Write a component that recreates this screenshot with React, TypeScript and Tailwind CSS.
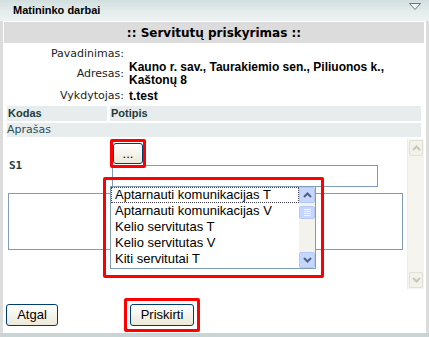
const items = [
  "Aptarnauti komunikacijas T",
  "Aptarnauti komunikacijas V",
  "Kelio servitutas T",
  "Kelio servitutas V",
  "Kiti servitutai T",
];

function XpButton({ label, className }: { label: string; className: string }) {
  return (
    <button
      className={`flex items-center justify-center rounded-[3px] border border-[#003c74] bg-gradient-to-b from-white to-[#ece9d8] font-['Liberation_Sans',sans-serif] text-[13px] text-black ${className}`}
    >
      {label}
    </button>
  );
}

function Chevron({ up, color }: { up?: boolean; color: string }) {
  return (
    <svg width="9" height="6" viewBox="0 0 9 6">
      <path d={up ? "M1 5 L4.5 1.5 L8 5" : "M1 1 L4.5 4.5 L8 1"} fill="none" stroke={color} strokeWidth="2" />
    </svg>
  );
}

export default function App() {
  return (
    <div className="relative flex h-[337px] w-[429px] flex-col bg-[#dcdcdc] font-['DejaVu_Sans',sans-serif]">
      {/* Panel title */}
      <div className="flex h-[21px] shrink-0 items-center justify-between bg-gradient-to-b from-[#d2dfdf] via-[#e3ebeb] to-[#eef3f3] pl-[13px] pr-[8px]">
        <span className="font-['Liberation_Sans',sans-serif] text-[11px] font-bold text-black">Matininko darbai</span>
        <svg width="12" height="7" viewBox="0 0 12 7" className="mb-[8px]">
          <path d="M0.5 0.5 L11.5 0.5 L6 6.5 Z" fill="#f4f4f4" stroke="#6a7a7a" />
        </svg>
      </div>

      {/* Body */}
      <div className="ml-[3px] mr-[3px] flex flex-1 flex-col bg-white pl-[1px] pr-[2px] pt-[1px]">
        <div className="flex h-[21px] items-center justify-center bg-[#dcdcdc] text-[12px] font-bold text-black">
          :: Servitutų priskyrimas ::
        </div>

        {/* Info */}
        <div className="mt-[5px] grid grid-cols-[120px_1fr] gap-x-[5px] text-[11px] leading-[12px]">
          <span className="text-right text-[#222]">Pavadinimas:</span>
          <span />
          <span className="mt-[1px] self-center text-right text-[#222]">Adresas:</span>
          <span className="mt-[1px] font-['Liberation_Sans',sans-serif] text-[12px] font-bold leading-[13px] text-black">
            Kauno r. sav., Taurakiemio sen., Piliuonos k.,
            <br />
            Kaštonų 8
          </span>
          <span className="mt-[3px] text-right text-[#222]">Vykdytojas:</span>
          <span className="mt-[3px] font-['Liberation_Sans',sans-serif] text-[12px] font-bold text-black">t.test</span>
        </div>

        {/* Table header */}
        <div className="mt-[4px] flex gap-[3px] px-[3px] text-[11px]">
          <div className="flex h-[15px] w-[100px] items-center bg-[#e7eded] pl-[1px] font-['Liberation_Sans',sans-serif] font-bold text-[#1f3b3b]">
            Kodas
          </div>
          <div className="flex h-[15px] flex-1 items-center bg-[#e7eded] pl-[1px] font-['Liberation_Sans',sans-serif] font-bold text-[#1f3b3b]">
            Potipis
          </div>
        </div>
        <div className="mx-[3px] mt-[2px] flex h-[14px] items-center bg-[#e7eded] text-[11px] text-[#2f4f4f]">
          Aprašas
        </div>

        {/* Scroll area */}
        <div className="mt-[2px] flex h-[150px]">
          <div className="flex flex-1 flex-col pl-[4px]">
            <div className="flex">
              <div className="flex w-[101px] items-end pb-[13px] pl-[1px] font-['DejaVu_Sans_Mono',monospace] text-[11px] font-bold text-[#1f3b3b]">
                S1
              </div>
              <div className="flex flex-col">
                <XpButton label="..." className="ml-[4px] mt-[4px] h-[21px] w-[30px]" />
                <div className="ml-[3px] mt-[1px] h-[22px] w-[266px] border border-[#7f9db9] bg-white" />
              </div>
            </div>
            <div className="mt-[6px] h-[57px] w-[395px] border border-[#7f9db9] bg-white" />
          </div>
          {/* Page scrollbar (disabled) */}
          <div className="flex w-[17px] flex-col justify-between border-l border-[#eeede5] bg-[#f5f4ef] p-[1px]">
            <div className="flex h-[16px] items-center justify-center rounded-[2px] border border-[#e2e1d8] bg-[#f2f1ea]">
              <Chevron up color="#c9c7ba" />
            </div>
            <div className="flex h-[16px] items-center justify-center rounded-[2px] border border-[#e2e1d8] bg-[#f2f1ea]">
              <Chevron color="#c9c7ba" />
            </div>
          </div>
        </div>

        {/* Buttons */}
        <div className="mt-[15px] flex items-center">
          <XpButton label="Atgal" className="ml-[2px] h-[22px] w-[52px]" />
          <XpButton label="Priskirti" className="ml-[72px] h-[22px] w-[64px]" />
        </div>
      </div>
      <div className="h-[4px] shrink-0 bg-[#c9d5d5]" />

      {/* Open list box over the form */}
      <div className="absolute left-[110px] top-[186px] flex h-[83px] w-[206px] border border-[#7f9db9] bg-white">
        <div className="flex flex-1 flex-col font-['Liberation_Sans',sans-serif] text-[13px] text-black">
          {items.map((item, i) => (
            <div
              key={item}
              className={`flex h-[16px] items-center pl-[3px] ${i === 0 ? "border border-dotted border-[#445]" : "border border-transparent"}`}
            >
              {item}
            </div>
          ))}
        </div>
        <div className="flex w-[16px] flex-col bg-[#f3f2ec]">
          <div className="flex h-[16px] items-center justify-center rounded-[2px] border border-[#b4c8f6] bg-[#c6d6fc]">
            <Chevron up color="#4d6185" />
          </div>
          <div className="mt-[3px] flex h-[13px] flex-col items-center justify-center gap-[1px] rounded-[2px] border border-[#b4c8f6] bg-[#c6d6fc]">
            <div className="h-px w-[7px] bg-[#eef3ff]" />
            <div className="h-px w-[7px] bg-[#eef3ff]" />
            <div className="h-px w-[7px] bg-[#eef3ff]" />
            <div className="h-px w-[7px] bg-[#eef3ff]" />
          </div>
          <div className="flex-1" />
          <div className="flex h-[16px] items-center justify-center rounded-[2px] border border-[#b4c8f6] bg-[#c6d6fc]">
            <Chevron color="#4d6185" />
          </div>
        </div>
      </div>

      {/* Red highlight annotations */}
      <div className="pointer-events-none absolute left-[110px] top-[139px] h-[29px] w-[36px] rounded-[2px] border-[3px] border-[#ff0000]" />
      <div className="pointer-events-none absolute left-[103px] top-[177px] h-[101px] w-[221px] rounded-[2px] border-[3px] border-[#ff0000]" />
      <div className="pointer-events-none absolute left-[124px] top-[298px] h-[34px] w-[76px] rounded-[2px] border-[3px] border-[#ff0000]" />
    </div>
  );
}
